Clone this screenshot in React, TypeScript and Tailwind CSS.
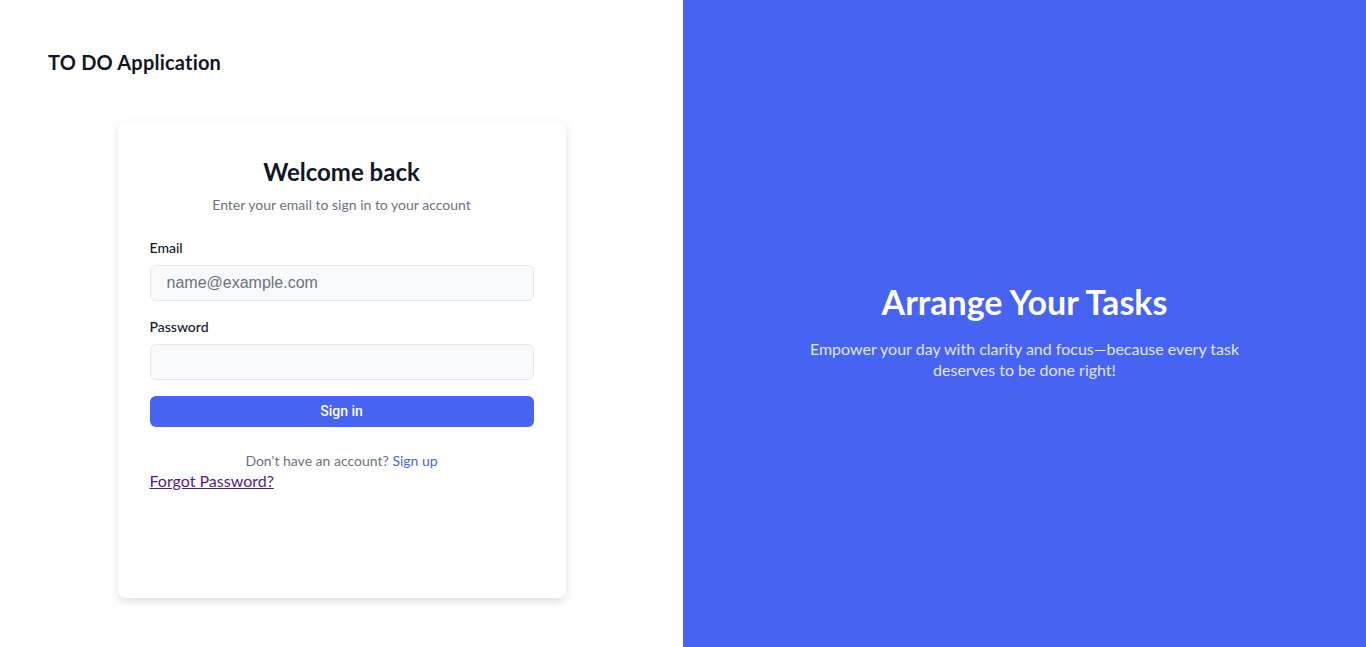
export default function App() {
  return (
    <div className="flex h-[647px] w-full font-['Lato','Noto_Sans',sans-serif]">
      {/* Left side - form */}
      <div className="w-1/2 bg-white px-12 pt-12">
        <h1 className="text-[20px] leading-7 font-bold tracking-[0.2px] text-gray-900">TO DO Application</h1>
        <div className="mx-auto mt-[45px] h-[477px] w-[448px] rounded-lg bg-white px-8 pt-[35px] shadow-[0_4px_8px_rgba(0,0,0,0.12)]">
          <h2 className="text-center text-[24px] leading-8 font-bold text-gray-900">Welcome back</h2>
          <p className="mt-[7px] text-center text-[14px] leading-5 text-gray-500">
            Enter your email to sign in to your account
          </p>
          <label className="mt-[23px] block text-[14px] leading-5 font-medium text-gray-900">Email</label>
          <input
            type="email"
            placeholder="name@example.com"
            className="mt-[7px] block h-[36px] w-full rounded-md border border-gray-200 bg-[#f8f9fb] px-4 font-['Liberation_Sans',Arial,sans-serif] text-[16px] placeholder:text-gray-500"
          />
          <label className="mt-[16px] block text-[14px] leading-5 font-medium text-gray-900">Password</label>
          <input
            type="password"
            className="mt-[7px] block h-[36px] w-full rounded-md border border-gray-200 bg-[#f8f9fb] px-4"
          />
          <button className="mt-[16px] block h-[31px] w-full rounded-md bg-[#4763f1] font-['Roboto','Liberation_Sans',sans-serif] text-[14px] font-medium text-white">
            Sign in
          </button>
          <p className="mt-[24px] text-center text-[14px] leading-5 text-gray-500">
            Don't have an account? <a className="text-[#4763f1]">Sign up</a>
          </p>
          <a href="#" className="block w-fit text-[16px] leading-5 text-[#551a8b] underline">
            Forgot Password?
          </a>
        </div>
      </div>

      {/* Right side - hero */}
      <div className="flex w-1/2 flex-col items-center justify-center bg-[#4763f1] pt-[14px] text-center">
        <h2 className="text-[34px] leading-10 font-bold text-white">Arrange Your Tasks</h2>
        <p className="mt-[16px] w-[450px] text-[16px] leading-[21px] text-indigo-100">
          Empower your day with clarity and focus—because every task deserves to be done right!
        </p>
      </div>
    </div>
  );
}
